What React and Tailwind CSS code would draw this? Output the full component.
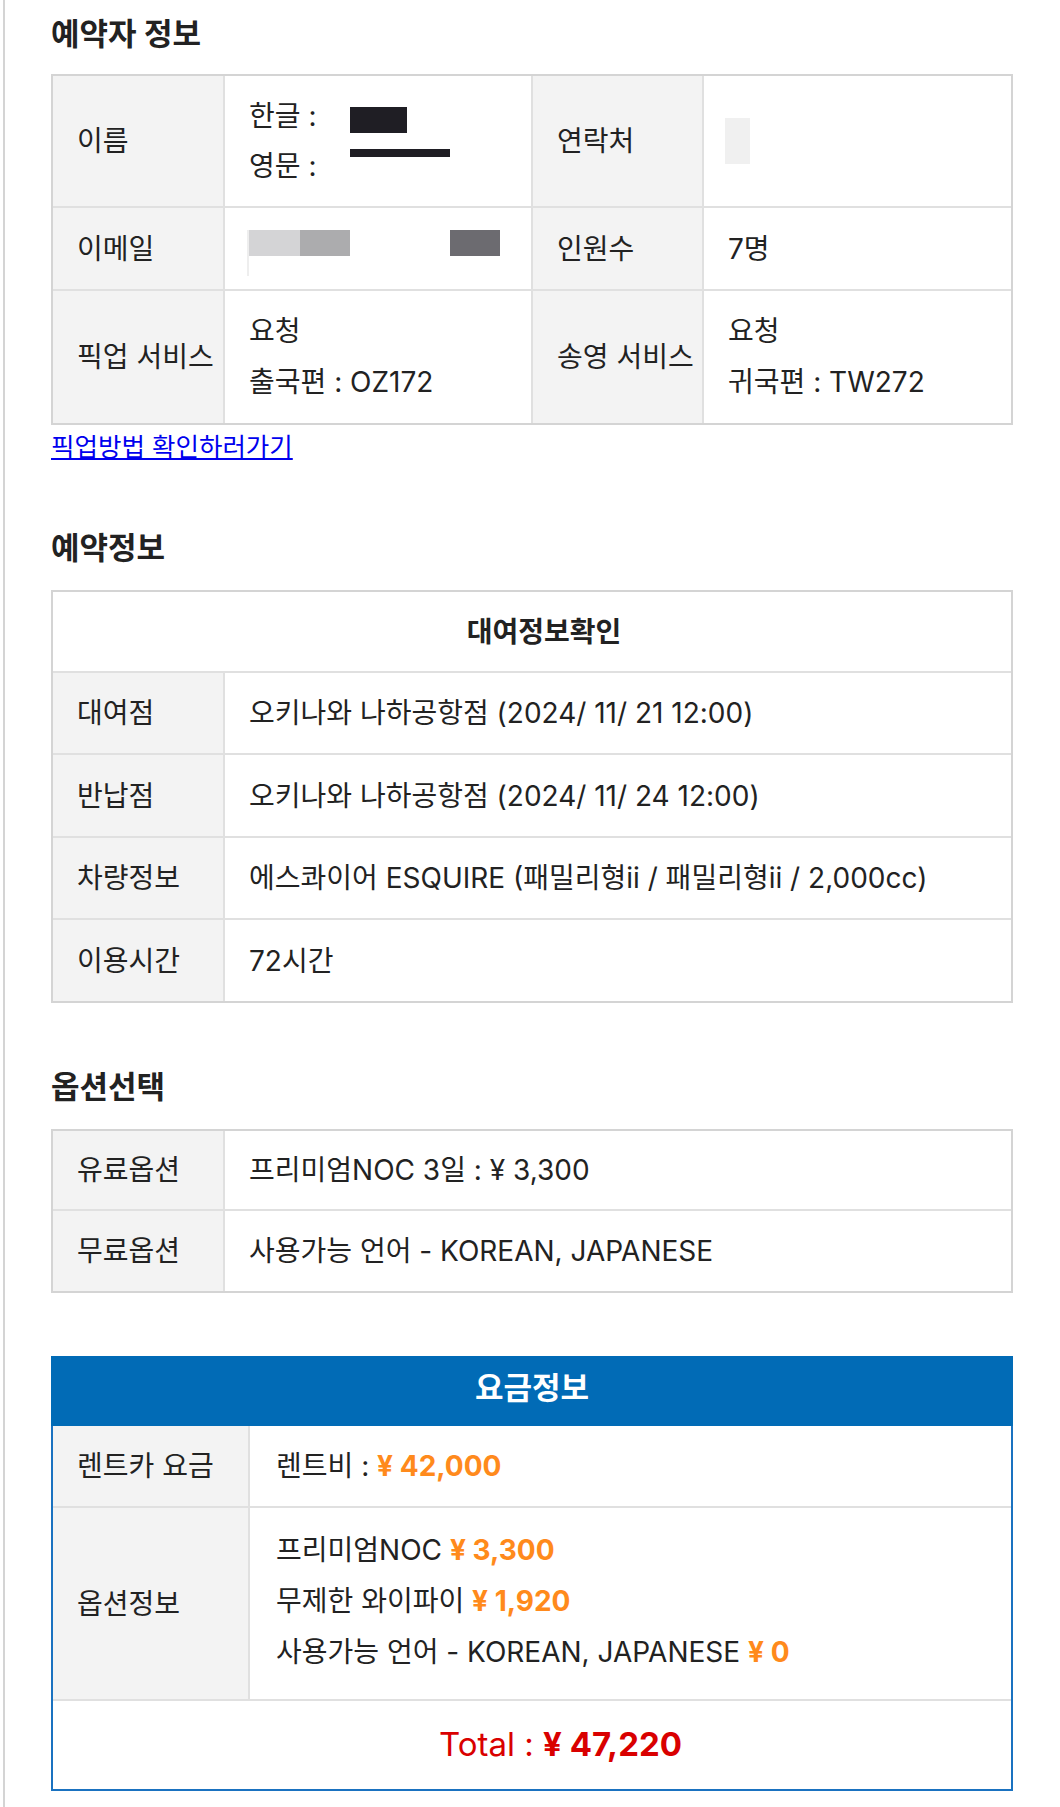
import React from "react";

const Label = ({ children, className = "" }) => (
  <div
    className={`flex items-center pl-6 bg-[#f3f3f3] border-r-2 border-[#e0e0e0] whitespace-nowrap ${className}`}
  >
    {children}
  </div>
);

const Cell = ({ children, className = "" }) => (
  <div className={`flex items-center pl-6 whitespace-nowrap ${className}`}>
    {children}
  </div>
);

const Heading = ({ children, className = "" }) => (
  <h2
    className={`h-[41px] flex items-center text-[31px] font-bold text-[#222] ${className}`}
  >
    {children}
  </h2>
);

const Yen = ({ children }) => (
  <span className="font-bold text-[#ff8a1c]">{children}</span>
);

function App() {
  return (
    <div className="min-h-screen bg-white font-['Inter','Noto_Sans_CJK_KR',sans-serif] text-[28px] text-[#222]">
      <div className="ml-[3px] border-l-2 border-[#d4d4d4] min-h-[1807px] pl-[46px] pr-[47px]">
        {/* 예약자 정보 */}
        <div className="h-[74px] pb-[7px] flex items-center">
          <h2 className="text-[31px] font-bold leading-none">예약자 정보</h2>
        </div>

        <div className="border-2 border-[#d4d4d4]">
          <div className="flex h-[132px] border-b-2 border-[#e0e0e0]">
            <Label className="w-[172px]">이름</Label>
            <div className="w-[308px] border-r-2 border-[#e0e0e0] pl-6 flex flex-col justify-center leading-[50px]">
              <div className="flex">
                <span className="w-[101px]">한글 :</span>
                <span className="mt-[16px] w-[57px] h-[26px] bg-[#1f1e24]" />
              </div>
              <div className="flex">
                <span className="w-[101px]">영문 :</span>
                <span className="mt-[8px] w-[100px] h-[8px] bg-[#1f1e24]" />
              </div>
            </div>
            <Label className="w-[171px]">연락처</Label>
            <div className="flex-1 flex items-center pl-[21px]">
              <span className="w-[25px] h-[46px] bg-[#f0f0f0]" />
            </div>
          </div>

          <div className="flex h-[83px] border-b-2 border-[#e0e0e0]">
            <Label className="w-[172px]">이메일</Label>
            <div className="w-[308px] border-r-2 border-[#e0e0e0] pl-[22px] pt-[22px] flex items-start">
              <span className="w-[2px] h-[46px] bg-[#eeeeee]" />
              <span className="w-[51px] h-[26px] bg-[#d4d4d6]" />
              <span className="w-[50px] h-[26px] bg-[#acacae]" />
              <span className="w-[100px]" />
              <span className="w-[50px] h-[26px] bg-[#6c6b70]" />
            </div>
            <Label className="w-[171px]">인원수</Label>
            <Cell className="flex-1">7명</Cell>
          </div>

          <div className="flex h-[132px]">
            <Label className="w-[172px]">픽업 서비스</Label>
            <div className="w-[308px] border-r-2 border-[#e0e0e0] pl-6 flex flex-col justify-center leading-[51px]">
              <div>요청</div>
              <div>출국편 : OZ172</div>
            </div>
            <Label className="w-[171px]">송영 서비스</Label>
            <div className="flex-1 pl-6 flex flex-col justify-center leading-[51px]">
              <div>요청</div>
              <div>귀국편 : TW272</div>
            </div>
          </div>
        </div>

        <div className="h-[44px] flex items-center">
          <a
            href="#"
            className="text-[25.5px] text-[#0000ee] underline leading-none"
          >
            픽업방법 확인하러가기
          </a>
        </div>

        {/* 예약정보 */}
        <Heading className="mt-[59px] mb-[21px]">예약정보</Heading>

        <div className="border-2 border-[#d4d4d4]">
          <div className="h-[81px] border-b-2 border-[#e0e0e0] flex items-center justify-center pl-[24px] text-[28px] font-bold">
            대여정보확인
          </div>
          {[
            ["대여점", "오키나와 나하공항점 (2024/ 11/ 21 12:00)", "h-[82px]"],
            ["반납점", "오키나와 나하공항점 (2024/ 11/ 24 12:00)", "h-[83px]"],
            [
              "차량정보",
              "에스콰이어 ESQUIRE (패밀리형ii / 패밀리형ii / 2,000cc)",
              "h-[82px]",
            ],
            ["이용시간", "72시간", "h-[81px]"],
          ].map(([k, v, h], i, arr) => (
            <div
              key={k}
              className={`flex ${h} ${
                i < arr.length - 1 ? "border-b-2 border-[#e0e0e0]" : ""
              }`}
            >
              <Label className="w-[172px]">{k}</Label>
              <Cell className="flex-1">{v}</Cell>
            </div>
          ))}
        </div>

        {/* 옵션선택 */}
        <Heading className="mt-[64px] mb-[21px]">옵션선택</Heading>

        <div className="border-2 border-[#d4d4d4]">
          <div className="flex h-[80px] border-b-2 border-[#e0e0e0]">
            <Label className="w-[172px]">유료옵션</Label>
            <Cell className="flex-1">프리미엄NOC 3일 : ¥ 3,300</Cell>
          </div>
          <div className="flex h-[80px]">
            <Label className="w-[172px]">무료옵션</Label>
            <Cell className="flex-1">사용가능 언어 - KOREAN, JAPANESE</Cell>
          </div>
        </div>

        {/* 요금정보 */}
        <div className="mt-[63px]">
          <div className="h-[70px] pb-[5px] bg-[#016bb6] flex items-center justify-center text-white text-[31px] font-bold">
            요금정보
          </div>
          <div className="border-2 border-t-0 border-[#1a72c0]">
            <div className="flex h-[82px] border-b-2 border-[#e0e0e0]">
              <Label className="w-[197px]">렌트카 요금</Label>
              <Cell className="flex-1 pl-[26px]">
                렌트비 :&nbsp;<Yen>¥ 42,000</Yen>
              </Cell>
            </div>
            <div className="flex h-[193px] border-b-2 border-[#e0e0e0]">
              <Label className="w-[197px]">옵션정보</Label>
              <div className="flex-1 pl-[26px] pb-[4px] flex flex-col justify-center leading-[51px] whitespace-nowrap">
                <div>
                  프리미엄NOC <Yen>¥ 3,300</Yen>
                </div>
                <div>
                  무제한 와이파이 <Yen>¥ 1,920</Yen>
                </div>
                <div>
                  사용가능 언어 - KOREAN, JAPANESE <Yen>¥ 0</Yen>
                </div>
              </div>
            </div>
            <div className="h-[88px] flex items-center justify-center pl-[57px] text-[33px] text-[#d90000]">
              Total :&nbsp;<span className="font-bold">¥ 47,220</span>
            </div>
          </div>
        </div>
      </div>
    </div>
  );
}

export default App;
